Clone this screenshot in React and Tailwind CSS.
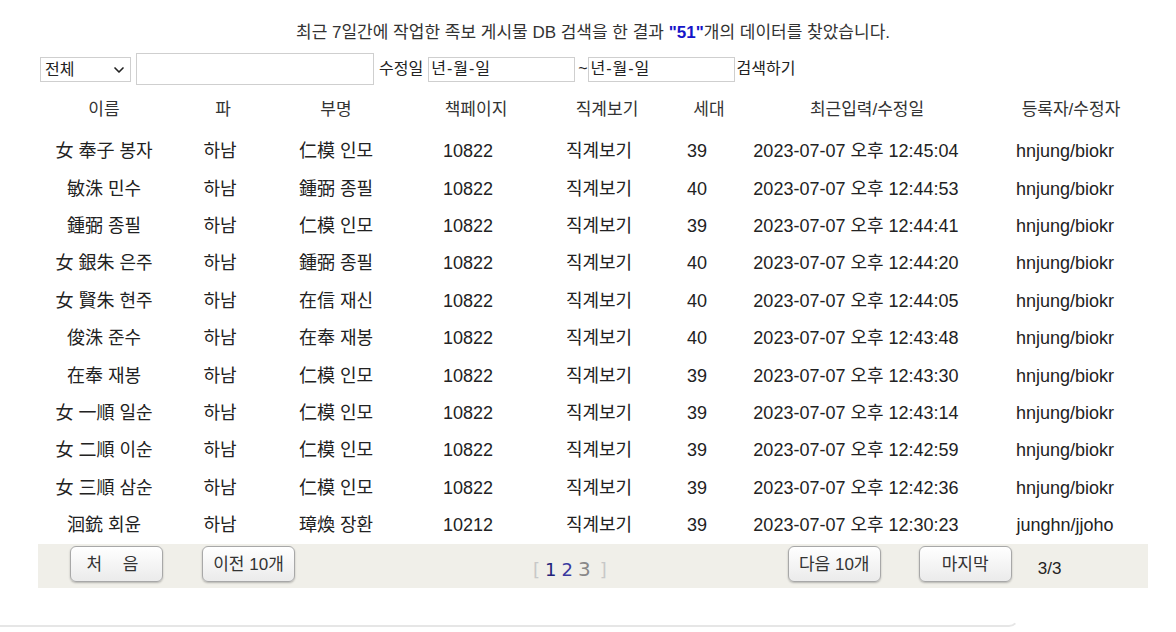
import { ChevronDown } from "lucide-react";

const font = { fontFamily: '"Liberation Sans", "Noto Sans CJK KR", sans-serif' };

const rows = [
  ["女 奉子 봉자", "하남", "仁模 인모", "10822", "직계보기", "39", "2023-07-07 오후 12:45:04", "hnjung/biokr"],
  ["敏洙 민수", "하남", "鍾弼 종필", "10822", "직계보기", "40", "2023-07-07 오후 12:44:53", "hnjung/biokr"],
  ["鍾弼 종필", "하남", "仁模 인모", "10822", "직계보기", "39", "2023-07-07 오후 12:44:41", "hnjung/biokr"],
  ["女 銀朱 은주", "하남", "鍾弼 종필", "10822", "직계보기", "40", "2023-07-07 오후 12:44:20", "hnjung/biokr"],
  ["女 賢朱 현주", "하남", "在信 재신", "10822", "직계보기", "40", "2023-07-07 오후 12:44:05", "hnjung/biokr"],
  ["俊洙 준수", "하남", "在奉 재봉", "10822", "직계보기", "40", "2023-07-07 오후 12:43:48", "hnjung/biokr"],
  ["在奉 재봉", "하남", "仁模 인모", "10822", "직계보기", "39", "2023-07-07 오후 12:43:30", "hnjung/biokr"],
  ["女 一順 일순", "하남", "仁模 인모", "10822", "직계보기", "39", "2023-07-07 오후 12:43:14", "hnjung/biokr"],
  ["女 二順 이순", "하남", "仁模 인모", "10822", "직계보기", "39", "2023-07-07 오후 12:42:59", "hnjung/biokr"],
  ["女 三順 삼순", "하남", "仁模 인모", "10822", "직계보기", "39", "2023-07-07 오후 12:42:36", "hnjung/biokr"],
  ["洄銃 회윤", "하남", "璋煥 장환", "10212", "직계보기", "39", "2023-07-07 오후 12:30:23", "junghn/jjoho"],
];

const headers = ["이름", "파", "부명", "책페이지", "직계보기", "세대", "최근입력/수정일", "등록자/수정자"];

function PagerButton({ children, className = "" }) {
  return (
    <button
      className={`h-[36px] w-[93px] rounded-[6px] border border-[#a8a8a8] bg-gradient-to-b from-white to-[#ebebeb] text-[17px] text-[#333] shadow-[0_1px_2px_rgba(0,0,0,0.25)] ${className}`}
    >
      {children}
    </button>
  );
}

export default function App() {
  return (
    <div className="w-[1176px] h-[632px] bg-white text-[#222] overflow-hidden" style={font}>
      <div className="ml-[38px] w-[1110px] pt-[21px]">
        {/* 결과 안내 */}
        <p className="h-[24px] text-center text-[17px] leading-[24px] text-[#333]">
          최근 7일간에 작업한 족보 게시물 DB 검색을 한 결과{" "}
          <b className="text-[#1515c8]">"51"</b>개의 데이터를 찾았습니다.
        </p>

        {/* 검색 */}
        <div className="mt-[8px] flex h-[32px] items-center text-[16px]">
          <div className="relative ml-[2px] h-[25px] w-[91px]">
            <select className="h-full w-full appearance-none border border-[#cfcfcf] bg-white pl-[4px] text-[16px] text-[#222] outline-none">
              <option>전체</option>
            </select>
            <ChevronDown className="pointer-events-none absolute right-[4px] top-[5px] h-[16px] w-[16px]" strokeWidth={2.5} />
          </div>
          <input className="ml-[5px] h-[32px] w-[238px] border border-[#cfcfcf] outline-none" />
          <span className="ml-[5px]">수정일</span>
          <input
            placeholder="년-월-일"
            className="ml-[5px] h-[25px] w-[147px] border border-[#cfcfcf] pl-[2px] text-[16px] tracking-[1px] outline-none placeholder:text-[#222]"
          />
          <span className="ml-[3px]">~</span>
          <input
            placeholder="년-월-일"
            className="h-[25px] w-[147px] border border-[#cfcfcf] pl-[2px] text-[16px] tracking-[1px] outline-none placeholder:text-[#222]"
          />
          <span className="ml-[2px]">검색하기</span>
        </div>

        {/* 헤더 */}
        <div className="mt-[7px] mb-[5px] grid h-[36px] grid-cols-[132px_106px_120px_160px_102px_102px_214px_174px] items-center text-center text-[17px] text-[#333]">
          {headers.map((h, i) => (
            <div key={h} className={i === 7 ? "pl-[20px]" : ""}>
              {h}
            </div>
          ))}
        </div>

        {/* 목록 */}
        <div>
          {rows.map((r, idx) => (
            <div
              key={idx}
              className="grid h-[37.4px] grid-cols-[132px_100px_132px_132px_130px_66px_252px_166px] items-center text-center text-[18px]"
            >
              {r.map((c, i) => (
                <div key={i} className="whitespace-nowrap">
                  {c}
                </div>
              ))}
            </div>
          ))}
        </div>

        {/* 페이지 */}
        <div className="flex h-[44px] items-start bg-[#f0efe9] pt-[2px]">
          <PagerButton className="ml-[32px] tracking-[8px]">처 음</PagerButton>
          <PagerButton className="ml-[39px]">이전 10개</PagerButton>
          <div className="ml-[238px] mt-[8px] text-[18px] tracking-[1px]" style={{ fontFamily: '"DejaVu Sans", sans-serif' }}>
            <span className="text-[#c8c8c8]">[</span>
            <span className="text-[#22227a] ml-[4px]">1</span>
            <span className="text-[#3a3aa0] ml-[4px]">2</span>
            <span className="text-[#888] ml-[4px] text-[20px]">3</span>
            <span className="text-[#c8c8c8] ml-[8px]">]</span>
          </div>
          <PagerButton className="ml-[180px]">다음 10개</PagerButton>
          <PagerButton className="ml-[38px]">마지막</PagerButton>
          <span className="ml-[26px] mt-[10px] text-[17px]">3/3</span>
        </div>
      </div>

      {/* 하단 경계선 */}
      <div className="h-[39px] w-[1019px] rounded-br-[10px] border-b-2 border-r-2 border-[#e6e6e6] [border-right-color:transparent]" />
    </div>
  );
}
